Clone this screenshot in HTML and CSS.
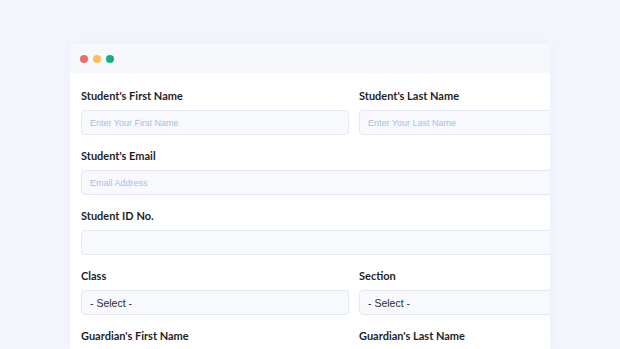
FILE: index.html
```html
<!DOCTYPE html>
<html lang="en">
<head>
    <meta charset="UTF-8">
    <meta name="viewport" content="width=device-width, initial-scale=1.0">
    <title>Student Registration</title>
    <link rel="stylesheet" href="styles.css">
</head>
<body>
    <div class="window">
        <div class="titlebar">
            <span class="dot red"></span>
            <span class="dot yellow"></span>
            <span class="dot green"></span>
        </div>
        <form class="form">
            <div class="field">
                <label>Student's First Name</label>
                <input type="text" placeholder="Enter Your First Name">
            </div>
            <div class="field">
                <label>Student's Last Name</label>
                <input type="text" placeholder="Enter Your Last Name">
            </div>
            <div class="field wide">
                <label>Student's Email</label>
                <input type="email" placeholder="Email Address">
            </div>
            <div class="field wide">
                <label>Student ID No.</label>
                <input type="text">
            </div>
            <div class="field">
                <label>Class</label>
                <div class="select">- Select -</div>
            </div>
            <div class="field">
                <label>Section</label>
                <div class="select">- Select -</div>
            </div>
            <div class="field">
                <label>Guardian's First Name</label>
                <input type="text">
            </div>
            <div class="field">
                <label>Guardian's Last Name</label>
                <input type="text">
            </div>
        </form>
    </div>
</body>
</html>
```

FILE: styles.css
```css
* {
    margin: 0;
    padding: 0;
    box-sizing: border-box;
}

html, body {
    height: 100%;
    overflow: hidden;
}

body {
    background-color: #f3f6fd;
    font-family: "Lato", "Liberation Sans", sans-serif;
    padding: 44px 0 0 70px;
}

.window {
    width: 480px;
    height: 100%;
    overflow: hidden;
    background-color: white;
    box-shadow: 0 0 12px rgba(180, 190, 215, 0.12);
}

.titlebar {
    height: 29px;
    display: flex;
    align-items: center;
    gap: 5px;
    padding-left: 10px;
    background-color: #f6f8fc;
}

.dot {
    width: 8px;
    height: 8px;
    border-radius: 50%;
}

.red { background-color: #ef6a6c; }
.yellow { background-color: #fbbf4e; }
.green { background-color: #12b07a; }

.form {
    padding: 16px 0 0 11px;
    display: grid;
    grid-template-columns: 268px 268px;
    column-gap: 10px;
    row-gap: 14px;
    width: 600px;
}

.field {
    display: flex;
    flex-direction: column;
    gap: 7px;
}

.wide {
    grid-column: span 2;
}

.field label {
    font-size: 11px;
    line-height: 14px;
    font-weight: 700;
    color: #1f1f26;
}

.field input,
.select {
    height: 25px;
    border: 1px solid #e2e9f5;
    border-radius: 4px;
    background-color: #f7f9fd;
    padding: 0 8px;
    font-family: "Liberation Sans", Arial, sans-serif;
    font-size: 9px;
    outline: none;
}

.field input::placeholder {
    color: #a8bde6;
}

.select {
    display: flex;
    align-items: center;
    font-size: 10.5px;
    color: #2a2a30;
}
```
